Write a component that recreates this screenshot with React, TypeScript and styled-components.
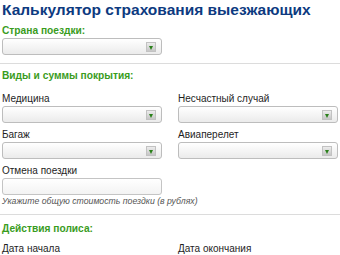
import React from 'react';
import styled, {createGlobalStyle} from "styled-components";

const Global = createGlobalStyle`
  body {
    margin: 0;
    background: #fff;
    font-family: "Liberation Sans", Arial, sans-serif;
  }
`
const Page = styled.div`
  width: 340px;
  padding: 0 2px;
  box-sizing: border-box;
`
const Title = styled.h1`
  margin: 0;
  font-size: 15.5px;
  line-height: 19px;
  font-weight: 700;
  color: #0d3a80;
  white-space: nowrap;
`
const Section = styled.div<{ $top: number }>`
  padding-top: ${p => p.$top}px;
`
const SectionTitle = styled.div<{ $gap: number }>`
  font-size: 10.2px;
  font-weight: 700;
  color: #3a9c1e;
  line-height: 12px;
  margin-bottom: ${p => p.$gap}px;
`
const Divider = styled.div<{ $top: number }>`
  height: 1px;
  background: #dcdcdc;
  margin: ${p => p.$top}px -2px 0;
`
const Grid = styled.div`
  display: grid;
  grid-template-columns: 160px 160px;
  column-gap: 16px;
  row-gap: 6px;
`
const Field = styled.div`
  display: flex;
  flex-direction: column;
`
const Label = styled.label`
  font-size: 10px;
  line-height: 12px;
  color: #1e1e1e;
  margin-bottom: 1px;
`
const Select = styled.div`
  position: relative;
  height: 17px;
  border: 1px solid #bdbdbd;
  border-radius: 3px;
  background: linear-gradient(#ffffff, #ebebeb);
  box-sizing: border-box;
`
const Arrow = styled.span`
  position: absolute;
  right: 5px;
  top: 3px;
  width: 10px;
  height: 10px;
  border: 1px solid #c2c2c2;
  box-sizing: border-box;
  background: linear-gradient(#ececec, #c6c6c6);
  display: flex;
  align-items: center;
  justify-content: center;

  &::after {
    content: "";
    border-left: 2.5px solid transparent;
    border-right: 2.5px solid transparent;
    border-top: 4px solid #2a801a;
    margin-top: 1px;
  }
`
const Input = styled.div`
  height: 17px;
  border: 1px solid #c4c4c4;
  border-radius: 3px;
  background: linear-gradient(#ffffff, #f3f3f3);
  box-sizing: border-box;
`
const Hint = styled.div`
  font-size: 8.7px;
  font-style: italic;
  color: #555;
  line-height: 11px;
  margin-top: 1px;
  white-space: nowrap;
`

const SelectBox = () => (
    <Select>
        <Arrow/>
    </Select>
)

const App = () => {
    return (
        <Page>
            <Global/>
            <Title>Калькулятор страхования выезжающих</Title>
            <Section $top={6}>
                <SectionTitle $gap={1}>Страна поездки:</SectionTitle>
                <Grid>
                    <SelectBox/>
                </Grid>
            </Section>
            <Divider $top={8}/>
            <Section $top={6}>
                <SectionTitle $gap={11}>Виды и суммы покрытия:</SectionTitle>
                <Grid>
                    <Field>
                        <Label>Медицина</Label>
                        <SelectBox/>
                    </Field>
                    <Field>
                        <Label>Несчастный случай</Label>
                        <SelectBox/>
                    </Field>
                    <Field>
                        <Label>Багаж</Label>
                        <SelectBox/>
                    </Field>
                    <Field>
                        <Label>Авиаперелет</Label>
                        <SelectBox/>
                    </Field>
                    <Field>
                        <Label>Отмена поездки</Label>
                        <Input/>
                        <Hint>Укажите общую стоимость поездки (в рублях)</Hint>
                    </Field>
                </Grid>
            </Section>
            <Divider $top={7}/>
            <Section $top={8}>
                <SectionTitle $gap={8}>Действия полиса:</SectionTitle>
                <Grid>
                    <Field>
                        <Label>Дата начала</Label>
                    </Field>
                    <Field>
                        <Label>Дата окончания</Label>
                    </Field>
                </Grid>
            </Section>
        </Page>
    );
};

export default App;
